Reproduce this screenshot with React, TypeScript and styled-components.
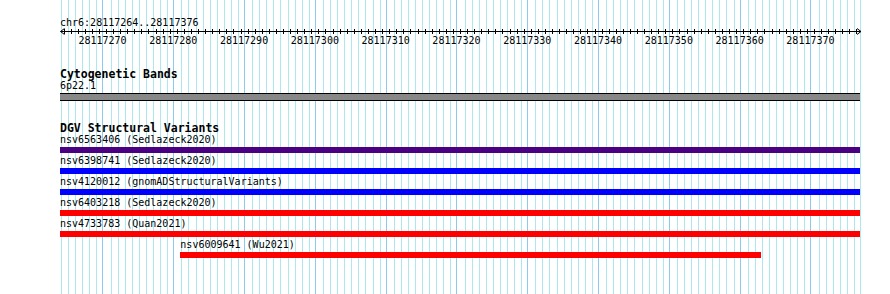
import React from "react";
import styled, { createGlobalStyle } from "styled-components";

const BASES = 113;
const START = 28117264;
const END = 28117376;
const BASE_W = 800 / BASES;

const MINOR = "#aee8ee";
const MAJOR = "#8ccaf0";

interface Variant {
    id: string;
    source: string;
    color: string;
    start: number;
    end: number;
}

const variants: Variant[] = [
    { id: "nsv6563406", source: "Sedlazeck2020", color: "#4b0082", start: 0, end: BASES },
    { id: "nsv6398741", source: "Sedlazeck2020", color: "#0000ff", start: 0, end: BASES },
    { id: "nsv4120012", source: "gnomADStructuralVariants", color: "#0000ff", start: 0, end: BASES },
    { id: "nsv6403218", source: "Sedlazeck2020", color: "#ff0000", start: 0, end: BASES },
    { id: "nsv4733783", source: "Quan2021", color: "#ff0000", start: 0, end: BASES },
    { id: "nsv6009641", source: "Wu2021", color: "#ff0000", start: 17, end: 99 },
];

const majorTicks = Array.from({ length: 11 }, (_, k) => 6 + k * 10);

const Axis = () => (
    <AxisSvg width={800} height={6} viewBox="0 0 800 6">
        <line x1={0.5} y1={3.5} x2={801} y2={3.5} stroke="#000" />
        <polyline points="4.5,0.5 0.5,3.5 4.5,6.5" fill="none" stroke="#000" />
        <polyline points="797,0.5 801,3.5 797,6.5" fill="none" stroke="#000" />
        {Array.from({ length: BASES }, (_, i) => {
            const x = Math.round(BASE_W * (i + 0.5)) + 0.5;
            return <line key={i} x1={x} y1={1} x2={x} y2={6} stroke="#000" />;
        })}
    </AxisSvg>
);

const App = () => {
    return (
        <Page>
            <GlobalStyle />
            <Stage>
                <Guides>
                    {Array.from({ length: BASES }, (_, i) => (
                        <Guide key={i} $major={(i - 6) % 10 === 0} />
                    ))}
                </Guides>
                <Tracks>
                    <Position>chr6:{START}..{END}</Position>
                    <Axis />
                    <TickRow>
                        {majorTicks.map((i) => (
                            <TickLabel key={i} $at={i}>{START + i}</TickLabel>
                        ))}
                    </TickRow>

                    <TrackTitle $top={21}>Cytogenetic Bands</TrackTitle>
                    <Row>
                        <FeatureLabel $start={0}>6p22.1</FeatureLabel>
                    </Row>
                    <Band />

                    <TrackTitle $top={21}>DGV Structural Variants</TrackTitle>
                    {variants.map((v) => (
                        <VariantBlock key={v.id}>
                            <FeatureLabel $start={v.start}>
                                {v.id} ({v.source})
                            </FeatureLabel>
                            <FeatureBar $start={v.start} $end={v.end} $color={v.color} />
                        </VariantBlock>
                    ))}
                </Tracks>
            </Stage>
        </Page>
    );
};

export default App;

const GlobalStyle = createGlobalStyle`
    html, body {
        margin: 0;
        padding: 0;
        background: #fff;
    }
    body {
        font-family: "DejaVu Sans Mono", "Liberation Mono", monospace;
        color: #000;
    }
`;

const Page = styled.div`
    padding-left: 60px;
    height: 294px;
    overflow: hidden;
`;

const Stage = styled.div`
    display: grid;
    width: 801px;
    height: 100%;
`;

const Guides = styled.div`
    grid-area: 1 / 1;
    width: 800px;
    display: grid;
    grid-template-columns: repeat(${BASES}, 1fr);
    border-right: 1px solid ${MINOR};
`;

const Guide = styled.div<{ $major: boolean }>`
    border-left: 1px solid ${({ $major }) => ($major ? MAJOR : MINOR)};
    margin-left: ${({ $major }) => ($major ? 0 : 1)}px;
`;

const Tracks = styled.div`
    grid-area: 1 / 1;
    z-index: 1;
    width: 800px;
    display: flex;
    flex-direction: column;
`;

const Position = styled.div`
    margin-top: 18px;
    height: 10px;
    font-size: 10px;
    line-height: 10px;
    white-space: nowrap;
`;

const AxisSvg = styled.svg`
    display: block;
    overflow: visible;
`;

const Row = styled.div`
    display: grid;
    grid-template-columns: repeat(${BASES}, 1fr);
`;

const TickRow = styled(Row)`
    padding-top: 1px;
`;

const TickLabel = styled.div<{ $at: number }>`
    grid-column: ${({ $at }) => $at - 4} / span 10;
    text-align: center;
    font-size: 10px;
    line-height: 12px;
    height: 12px;
    white-space: nowrap;
`;

const TrackTitle = styled.div<{ $top: number }>`
    margin-top: ${({ $top }) => $top}px;
    height: 12px;
    font-size: 11.5px;
    line-height: 12px;
    font-weight: bold;
    white-space: nowrap;
`;

const FeatureLabel = styled.div<{ $start: number }>`
    grid-column: ${({ $start }) => $start + 1} / -1;
    grid-row: 1;
    height: 12px;
    font-size: 10px;
    line-height: 12px;
    white-space: nowrap;
`;

const Band = styled.div`
    margin-top: 1px;
    height: 6px;
    background: #888888;
    border-top: 1px solid #000;
    border-bottom: 1px solid #000;
`;

const VariantBlock = styled(Row)`
    grid-template-rows: 12px 6px;
    row-gap: 1px;
    padding-bottom: 2px;
`;

const FeatureBar = styled.div<{ $start: number; $end: number; $color: string }>`
    grid-column: ${({ $start, $end }) => `${$start + 1} / ${$end + 1}`};
    grid-row: 2;
    background: ${({ $color }) => $color};
`;
